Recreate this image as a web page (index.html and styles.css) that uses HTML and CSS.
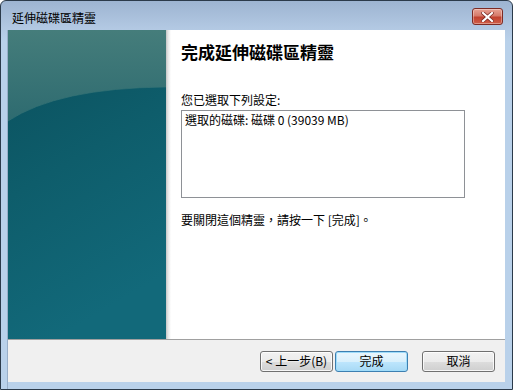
FILE: index.html
```html
<!DOCTYPE html>
<html lang="zh-Hant">
<head>
    <meta charset="UTF-8">
    <title>延伸磁碟區精靈</title>
    <link rel="stylesheet" href="styles.css">
</head>
<body>
    <div class="window">
        <div class="titlebar">
            <span class="title">延伸磁碟區精靈</span>
            <button class="close-btn" aria-label="關閉">
                <svg width="13" height="10" viewBox="0 0 13 10">
                    <path d="M2 1 L11 9 M11 1 L2 9" stroke="#7a2a24" stroke-width="3.6" stroke-linecap="square"/>
                    <path d="M2 1 L11 9 M11 1 L2 9" stroke="#ffffff" stroke-width="2.2" stroke-linecap="square"/>
                </svg>
            </button>
        </div>

        <div class="client">
            <div class="main">
                <div class="side">
                    <svg width="158" height="309" viewBox="0 0 158 309" preserveAspectRatio="none">
                        <defs>
                            <linearGradient id="deep" x1="0" y1="0" x2="0.3" y2="1">
                                <stop offset="0" stop-color="#0a4f5c"/>
                                <stop offset="0.5" stop-color="#0e5d6b"/>
                                <stop offset="1" stop-color="#12697a"/>
                            </linearGradient>
                            <linearGradient id="glow" x1="0" y1="0" x2="0" y2="1">
                                <stop offset="0" stop-color="#457d7b"/>
                                <stop offset="1" stop-color="#2e6b70"/>
                            </linearGradient>
                        </defs>
                        <rect width="158" height="309" fill="url(#deep)"/>
                        <path d="M0 0 H158 V57 Q50 58 0 91 Z" fill="url(#glow)"/>
                        <path d="M0 91 Q50 58 158 57" fill="none" stroke="#3a7778" stroke-width="1" opacity="0.6"/>
                    </svg>
                </div>

                <div class="content">
                    <h1 class="heading">完成延伸磁碟區精靈</h1>
                    <p class="label">您已選取下列設定:</p>
                    <div class="summary">選取的磁碟: 磁碟 0 (39039 MB)</div>
                    <p class="hint">要關閉這個精靈，請按一下 [完成]。</p>
                </div>
            </div>

            <div class="footer">
                <button class="btn">&lt; 上一步(B)</button>
                <button class="btn btn-default">完成</button>
                <button class="btn btn-cancel">取消</button>
            </div>
        </div>
    </div>
</body>
</html>
```

FILE: styles.css
```css
* {
    box-sizing: border-box;
}
body {
    margin: 0;
    font-family: "Noto Sans CJK TC", "Noto Sans", sans-serif;
    font-size: 12px;
    color: #000;
    background: #ffffff;
}
.window {
    width: 513px;
    height: 390px;
    border: 1px solid #2b3a4a;
    border-radius: 6px 6px 0 0;
    background: linear-gradient(to bottom, #9db4d1 0, #b3c9e3 28px, #b9d1ea 40px, #b9d1ea 100%);
    display: flex;
    flex-direction: column;
    overflow: hidden;
}
.titlebar {
    height: 29px;
    display: flex;
    align-items: center;
    padding: 0 9px 0 11px;
}
.title {
    flex: 1;
    line-height: 14px;
    padding-top: 4px;
    color: #000;
}
.close-btn {
    width: 31px;
    height: 17px;
    margin-top: 2px;
    padding: 0;
    border: 1px solid #7d2b24;
    border-radius: 3px;
    background: linear-gradient(to bottom, #e8a294 0, #d67a6a 45%, #c2412f 55%, #cf5e48 100%);
    display: flex;
    align-items: center;
    justify-content: center;
    box-shadow: inset 0 0 0 1px rgba(255, 255, 255, 0.35);
}
.client {
    flex: 1;
    margin: 0 7px 0 6px;
    display: flex;
    flex-direction: column;
    border-left: 1px solid #98aec8;
}
.main {
    height: 309px;
    display: flex;
    background: #ffffff;
}
.side {
    width: 158px;
    height: 309px;
}
.side svg {
    display: block;
}
.content {
    flex: 1;
    padding: 13px 40px 0 15px;
    background: linear-gradient(to right, #c4c4c4 0, #e6e6e6 2px, #ffffff 5px);
}
.heading {
    margin: 0;
    font-size: 17px;
    line-height: 17px;
    font-weight: bold;
}
.label {
    margin: 34px 0 4px 0;
    line-height: 12px;
}
.summary {
    height: 88px;
    border: 1px solid #8e9196;
    padding: 2px 3px;
    line-height: 14px;
}
.hint {
    margin: 16px 0 0 0;
    line-height: 12px;
}
.footer {
    height: 43px;
    border-top: 1px solid #a0a0a0;
    background: #f0f0f0;
    display: flex;
    align-items: center;
    justify-content: flex-end;
    padding: 0 10px 0 0;
    margin-bottom: 7px;
}
.btn {
    width: 73px;
    height: 21px;
    margin-left: 2px;
    padding: 0;
    font-family: inherit;
    font-size: 12px;
    line-height: 12px;
    color: #000;
    border: 1px solid #707070;
    border-radius: 3px;
    background: linear-gradient(to bottom, #f2f2f2 0, #ebebeb 50%, #dddddd 51%, #cfcfcf 100%);
    box-shadow: inset 0 0 0 1px rgba(255, 255, 255, 0.8);
}
.btn-default {
    border-color: #3c7fb1;
    background: linear-gradient(to bottom, #eaf6fd 0, #d9f0fc 50%, #bee6fd 51%, #a7d9f5 100%);
    box-shadow: inset 0 0 0 1px #9fdcfa;
}
.btn-cancel {
    margin-left: 14px;
}
```
